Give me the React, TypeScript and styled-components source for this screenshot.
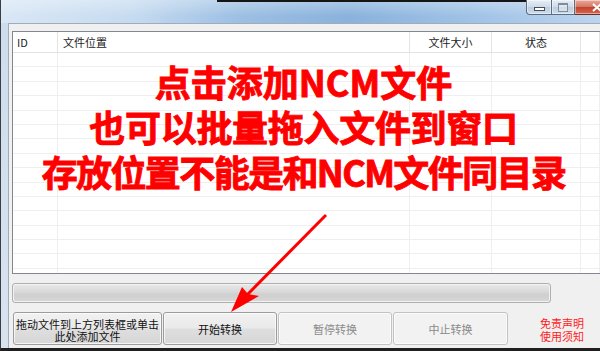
import React from 'react';
import styled, { createGlobalStyle } from 'styled-components';

const GlobalStyle = createGlobalStyle`
  html, body {
    margin: 0;
    padding: 0;
    background: #ffffff;
  }
  body {
    font-family: "Noto Sans CJK SC", "Noto Sans", sans-serif;
  }
`;

const Window = styled.div`
  position: relative;
  width: 600px;
  height: 351px;
  box-sizing: border-box;
  overflow: hidden;
  display: flex;
  flex-direction: column;
  border-left: 1px solid #3a3f45;
  border-bottom: 3px solid #1f1f1f;
  background: linear-gradient(to bottom, #cddcec, #d9e3ee);
`;

const TitleBar = styled.div`
  flex: none;
  height: 23px;
  display: flex;
  justify-content: flex-end;
  align-items: flex-start;
  overflow: hidden;
  background:
    linear-gradient(to right, transparent 216px, #151515 216px) top / 100% 2px no-repeat,
    linear-gradient(to bottom, rgba(255, 255, 255, 0.3), rgba(255, 255, 255, 0) 70%),
    linear-gradient(
      to right,
      #d9e7f5 0%,
      #c6dbf0 22%,
      #9cbfe3 40%,
      #8ab2dc 58%,
      #9fc2e6 78%,
      #bcd4ee 100%
    );
`;

const Controls = styled.div`
  display: flex;
  height: 15px;
  margin-right: -20px;
`;

type CaptionProps = { $kind: 'min' | 'max' | 'close' };

const CaptionButton = styled.div<CaptionProps>`
  box-sizing: border-box;
  height: 15px;
  display: flex;
  align-items: center;
  justify-content: center;
  width: ${({ $kind }) => ($kind === 'min' ? 26 : $kind === 'max' ? 23 : 45)}px;
  border: 1px solid ${({ $kind }) => ($kind === 'close' ? '#6a3024' : '#5d6d80')};
  border-top: none;
  border-left-width: ${({ $kind }) => ($kind === 'min' ? 1 : 0)}px;
  border-radius: ${({ $kind }) =>
    $kind === 'min' ? '0 0 0 4px' : $kind === 'close' ? '0 0 4px 0' : '0'};
  background: ${({ $kind }) =>
    $kind === 'close'
      ? 'linear-gradient(to bottom, #eaa99b 0%, #d67765 48%, #c3422c 52%, #d5664e 100%)'
      : 'linear-gradient(to bottom, #e6edf5 0%, #cfdbe8 48%, #bccde0 52%, #cedded 100%)'};
  box-shadow: inset 0 0 0 1px rgba(255, 255, 255, 0.45);
`;

const MinGlyph = styled.div`
  width: 9px;
  height: 2px;
  margin-top: 4px;
  background: #ffffff;
  border: 1px solid #42505f;
`;

const MaxGlyph = styled.div`
  width: 8px;
  height: 6px;
  border: 1px solid #7f8c9a;
  border-top-width: 2px;
  background: rgba(255, 255, 255, 0.3);
`;

const Frame = styled.div`
  flex: 1;
  display: flex;
  padding-left: 7px;
  min-height: 0;
`;

const Client = styled.div`
  flex: 1;
  display: flex;
  flex-direction: column;
  background: #f0f0f0;
  border-top: 1px solid #a0acb9;
  border-left: 1px solid #a0acb9;
  padding: 7px 0 3px 3px;
  min-width: 0;
`;

const ListView = styled.div`
  flex: none;
  height: 243px;
  box-sizing: border-box;
  border: 1px solid #828790;
  border-right: none;
  background: #ffffff;
  overflow: hidden;
`;

const columns = '45px 352px 82px 89px 1fr';

const HeaderRow = styled.div`
  display: grid;
  grid-template-columns: ${columns};
  height: 21px;
  box-sizing: border-box;
  border-bottom: 1px solid #e3e3e3;
`;

type HeaderCellProps = { $align?: 'left' | 'center'; $pad?: number };

const HeaderCell = styled.div<HeaderCellProps>`
  box-sizing: border-box;
  border-right: 1px solid #e3e3e3;
  font-size: 11px;
  line-height: 20px;
  color: #1c1c1c;
  white-space: nowrap;
  text-align: ${({ $align }) => $align ?? 'left'};
  padding-left: ${({ $pad }) => $pad ?? 0}px;
`;

const BodyRow = styled.div`
  display: grid;
  grid-template-columns: ${columns};
  height: 14.4px;
  box-sizing: border-box;
  border-bottom: 1px solid #efefef;
`;

const BodyCell = styled.div`
  border-right: 1px solid #efefef;
`;

const Progress = styled.div`
  flex: none;
  margin-top: 9px;
  width: 539px;
  height: 20px;
  box-sizing: border-box;
  border: 1px solid #b0b0b0;
  border-radius: 3px;
  background: linear-gradient(to bottom, #e9e9e9 0%, #dadada 40%, #cfcfcf 60%, #d8d8d8 100%);
  box-shadow: inset 0 0 0 1px #f2f2f2;
`;

const ButtonRow = styled.div`
  flex: none;
  margin-top: 9px;
  padding-left: 1px;
  display: flex;
  align-items: center;
  gap: 1px;
`;

type ActionProps = { $width: number; $disabled?: boolean };

const ActionButton = styled.div<ActionProps>`
  box-sizing: border-box;
  width: ${({ $width }) => $width}px;
  height: 33px;
  padding-top: 2px;
  display: flex;
  flex-direction: column;
  align-items: center;
  justify-content: center;
  text-align: center;
  border-radius: 3px;
  font-size: 11px;
  line-height: 13px;
  white-space: nowrap;
  color: ${({ $disabled }) => ($disabled ? '#8a8a8a' : '#111111')};
  border: 1px solid ${({ $disabled }) => ($disabled ? '#c2c2c2' : '#9c9c9c')};
  background: ${({ $disabled }) =>
    $disabled
      ? '#f2f2f2'
      : 'linear-gradient(to bottom, #f1f1f1 0%, #eaeaea 48%, #dedede 52%, #d6d6d6 100%)'};
  box-shadow: inset 0 0 0 1px rgba(255, 255, 255, 0.7);
`;

const TightLine = styled.span`
  display: block;
  height: 12px;
  line-height: 12px;
`;

const Notice = styled.div`
  margin-left: 31px;
  display: flex;
  flex-direction: column;
  font-size: 11px;
  color: #ff1a1a;
  padding-top: 2px;
`;

const NoticeLine = styled.span`
  display: block;
  height: 13px;
  line-height: 13px;
`;

const Annotation = styled.div`
  position: absolute;
  top: 59px;
  left: 0;
  right: 0;
  padding-left: 6px;
  display: flex;
  flex-direction: column;
  align-items: center;
  font-family: "Noto Sans CJK SC", "Noto Sans", sans-serif;
  font-weight: 700;
  font-size: 36px;
  color: #ff0000;
  -webkit-text-stroke: 0.9px #ff0000;
  white-space: nowrap;
  pointer-events: none;
`;

const AnnotationLine = styled.div<{ $spacing?: number }>`
  height: 45px;
  line-height: 45px;
  letter-spacing: ${({ $spacing }) => $spacing ?? 0}px;
`;

const ArrowLayer = styled.svg`
  position: absolute;
  left: 0;
  top: 0;
  pointer-events: none;
`;

const rows = Array.from({ length: 16 }, (_, i) => i);

const App = () => {
  return (
    <>
      <GlobalStyle />
      <Window>
        <TitleBar>
          <Controls>
            <CaptionButton $kind="min">
              <MinGlyph />
            </CaptionButton>
            <CaptionButton $kind="max">
              <MaxGlyph />
            </CaptionButton>
            <CaptionButton $kind="close">
              <svg width="10" height="9" viewBox="0 0 10 9">
                <path d="M1 1 L9 8 M9 1 L1 8" stroke="#ffffff" strokeWidth="2" />
              </svg>
            </CaptionButton>
          </Controls>
        </TitleBar>
        <Frame>
          <Client>
            <ListView>
              <HeaderRow>
                <HeaderCell $pad={4}>ID</HeaderCell>
                <HeaderCell $pad={5}>文件位置</HeaderCell>
                <HeaderCell $align="center">文件大小</HeaderCell>
                <HeaderCell $align="center">状态</HeaderCell>
                <HeaderCell />
              </HeaderRow>
              {rows.map((r) => (
                <BodyRow key={r}>
                  <BodyCell />
                  <BodyCell />
                  <BodyCell />
                  <BodyCell />
                  <BodyCell />
                </BodyRow>
              ))}
            </ListView>
            <Progress />
            <ButtonRow>
              <ActionButton $width={149}>
                <TightLine>拖动文件到上方列表框或单击</TightLine>
                <TightLine>此处添加文件</TightLine>
              </ActionButton>
              <ActionButton $width={114}>开始转换</ActionButton>
              <ActionButton $width={114} $disabled>
                暂停转换
              </ActionButton>
              <ActionButton $width={115} $disabled>
                中止转换
              </ActionButton>
              <Notice>
                <NoticeLine>免责声明</NoticeLine>
                <NoticeLine>使用须知</NoticeLine>
              </Notice>
            </ButtonRow>
          </Client>
        </Frame>
        <Annotation>
          <AnnotationLine>点击添加NCM文件</AnnotationLine>
          <AnnotationLine $spacing={-0.3}>也可以批量拖入文件到窗口</AnnotationLine>
          <AnnotationLine $spacing={-1.6}>存放位置不能是和NCM文件同目录</AnnotationLine>
        </Annotation>
        <ArrowLayer width="600" height="351" viewBox="0 0 600 351">
          <line x1="325" y1="215" x2="244" y2="297" stroke="#ff0000" strokeWidth="3" />
          <polygon points="230,312 241,287 247,294 258,296" fill="#ff0000" />
        </ArrowLayer>
      </Window>
    </>
  );
};

export default App;
